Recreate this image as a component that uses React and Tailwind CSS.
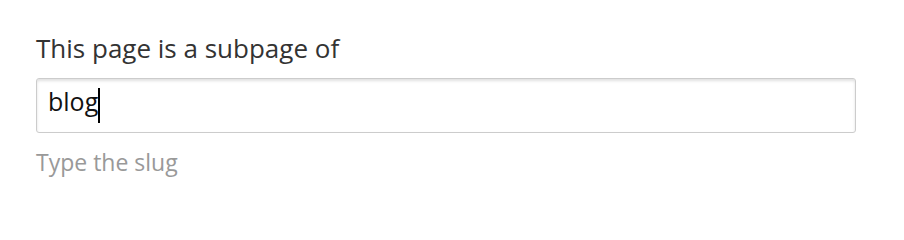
import React from 'react';

export default function App() {
  return (
    <div className="w-[904px] h-[204px] bg-white pl-[36px] pt-[31px] font-['Open_Sans',sans-serif]">
      <label className="block text-[26px] leading-[35px] text-[#333]">This page is a subpage of</label>
      <div className="mt-[12px] w-[820px] h-[55px] rounded-[3px] border border-[#cccccc] shadow-[inset_0_2px_3px_rgba(0,0,0,0.12)] bg-white flex items-start pl-[11px] pt-[5px]">
        <span className="text-[25px] leading-[34px] text-[#111]">blog</span>
        <span className="w-[1.5px] h-[35px] bg-black mt-[4px]" />
      </div>
      <p className="mt-[14px] text-[23px] leading-[31px] text-[#999]">Type the slug</p>
    </div>
  );
}
